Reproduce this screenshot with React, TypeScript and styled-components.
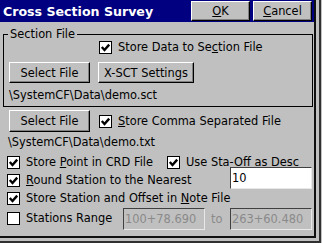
import styled, { createGlobalStyle } from "styled-components";

const GlobalStyle = createGlobalStyle`
  html, body {
    margin: 0;
    padding: 0;
    background: #c0c0c0;
  }
  body {
    font-family: "DejaVu Sans", Verdana, sans-serif;
    font-size: 11.4px;
    color: #000;
  }
`;

const Frame = styled.div`
  width: 321px;
  height: 243px;
  box-sizing: border-box;
  border-right: 2px solid #303030;
  border-bottom: 2px solid #303030;
`;

const Dialog = styled.div`
  width: 316px;
  height: 238px;
  box-sizing: border-box;
  border-right: 2px solid #101010;
  border-bottom: 2px solid #101010;
  display: flex;
  flex-direction: column;
`;

const TitleBar = styled.div`
  height: 22px;
  background: #000080;
  display: flex;
  align-items: center;
  gap: 3px;
  padding: 0 2px 0 3px;
`;

const Title = styled.div`
  flex: 1;
  color: #fff;
  font-weight: bold;
  font-size: 12.6px;
`;

const Button = styled.button<{ $w: number; $h?: number }>`
  width: ${(p) => p.$w}px;
  height: ${(p) => p.$h ?? 22}px;
  padding: 0;
  margin: 0;
  font-family: inherit;
  font-size: 11.4px;
  color: #000;
  background: #c0c0c0;
  border: 1px solid;
  border-color: #fff #000 #000 #fff;
  box-shadow: inset -1px -1px #808080;
`;

const Group = styled.fieldset`
  margin: 5px 1px 0 3px;
  padding: 0 4px 4px 5px;
  border: 1px solid #000;
  min-width: 0;
`;

const Legend = styled.legend`
  margin-left: -1px;
  padding: 0 2px;
  line-height: 14px;
`;

const Row = styled.div<{ $top?: number; $left?: number; $h?: number; $gap?: number }>`
  display: flex;
  align-items: center;
  height: ${(p) => p.$h ?? 13}px;
  margin-top: ${(p) => p.$top ?? 0}px;
  margin-left: ${(p) => p.$left ?? 0}px;
  gap: ${(p) => p.$gap ?? 0}px;
`;

const Check = styled.label<{ $w?: number }>`
  display: flex;
  align-items: center;
  gap: 6px;
  height: 13px;
  line-height: 13px;
  white-space: nowrap;
  flex: none;
  ${(p) => (p.$w ? `width: ${p.$w}px;` : "")}
`;

const Box = styled.span`
  width: 13px;
  height: 13px;
  box-sizing: border-box;
  background: #fff;
  border: 1px solid #000;
  display: flex;
  align-items: center;
  justify-content: center;
  flex: none;
`;

const Path = styled.div<{ $top: number; $left?: number }>`
  margin-top: ${(p) => p.$top}px;
  margin-left: ${(p) => p.$left ?? 0}px;
  line-height: 14px;
  height: 14px;
  white-space: nowrap;
`;

const Lower = styled.div`
  display: flex;
  flex-direction: column;
  padding-left: 7px;
`;

const Field = styled.input`
  width: 82px;
  height: 22px;
  box-sizing: border-box;
  margin: 0;
  padding: 0 0 0 1px;
  font-family: inherit;
  font-size: 11.4px;
  color: #000;
  background: #fff;
  border: 1px solid;
  border-color: #404040 #e8e8e8 #e8e8e8 #404040;
  outline: none;
  flex: none;

  &:disabled {
    color: #8a8a8a;
    background: #c0c0c0;
  }
`;

const RaisedField = styled(Field)`
  margin-top: -6px;
`;

const ToText = styled.span`
  width: 25px;
  box-sizing: border-box;
  padding-left: 6px;
  color: #8a8a8a;
`;

const CheckBox = ({ checked }: { checked?: boolean }) => (
  <Box>
    {checked && (
      <svg width="11" height="11" viewBox="0 0 11 11">
        <polyline points="1.8,5 4.5,8 9.2,2.6" fill="none" stroke="#000" strokeWidth="2.4" />
      </svg>
    )}
  </Box>
);

export default function App() {
  return (
    <>
      <GlobalStyle />
      <Frame>
        <Dialog>
          <TitleBar>
            <Title>Cross Section Survey</Title>
            <Button $w={59} $h={20}>
              <u>O</u>K
            </Button>
            <Button $w={59} $h={20}>
              <u>C</u>ancel
            </Button>
          </TitleBar>

          <Group>
            <Legend>Section File</Legend>
            <Row $left={90}>
              <Check>
                <CheckBox checked />
                <span>
                  Store Data to Se<u>c</u>tion File
                </span>
              </Check>
            </Row>
            <Row $top={8} $h={21} $gap={8}>
              <Button $w={81} $h={21}>Select File</Button>
              <Button $w={96} $h={21}>X-SCT Settings</Button>
            </Row>
            <Path $top={5}>\SystemCF\Data\demo.sct</Path>
          </Group>

          <Lower>
            <Row $top={3} $h={22} $left={2} $gap={9}>
              <Button $w={81}>Select File</Button>
              <Check>
                <CheckBox checked />
                <span>
                  <u>S</u>tore Comma Separated File
                </span>
              </Check>
            </Row>
            <Path $top={3} $left={1}>\SystemCF\Data\demo.txt</Path>
            <Row $top={7}>
              <Check $w={160}>
                <CheckBox checked />
                <span>
                  Store <u>P</u>oint in CRD File
                </span>
              </Check>
              <Check>
                <CheckBox checked />
                <span>
                  Use Sta-Off as <u>D</u>esc
                </span>
              </Check>
            </Row>
            <Row $top={5} $h={13}>
              <Check $w={223}>
                <CheckBox checked />
                <span>
                  <u>R</u>ound Station to the Nearest
                </span>
              </Check>
              <RaisedField defaultValue="10" />
            </Row>
            <Row $top={5}>
              <Check>
                <CheckBox checked />
                <span>
                  Store Station and Offset in <u>N</u>ote File
                </span>
              </Check>
            </Row>
            <Row $top={3} $h={21}>
              <Check $w={116}>
                <CheckBox />
                <span>
                  Stations Ran<u>g</u>e
                </span>
              </Check>
              <Field disabled defaultValue="100+78.690" />
              <ToText>to</ToText>
              <Field disabled defaultValue="263+60.480" />
            </Row>
          </Lower>
        </Dialog>
      </Frame>
    </>
  );
}
